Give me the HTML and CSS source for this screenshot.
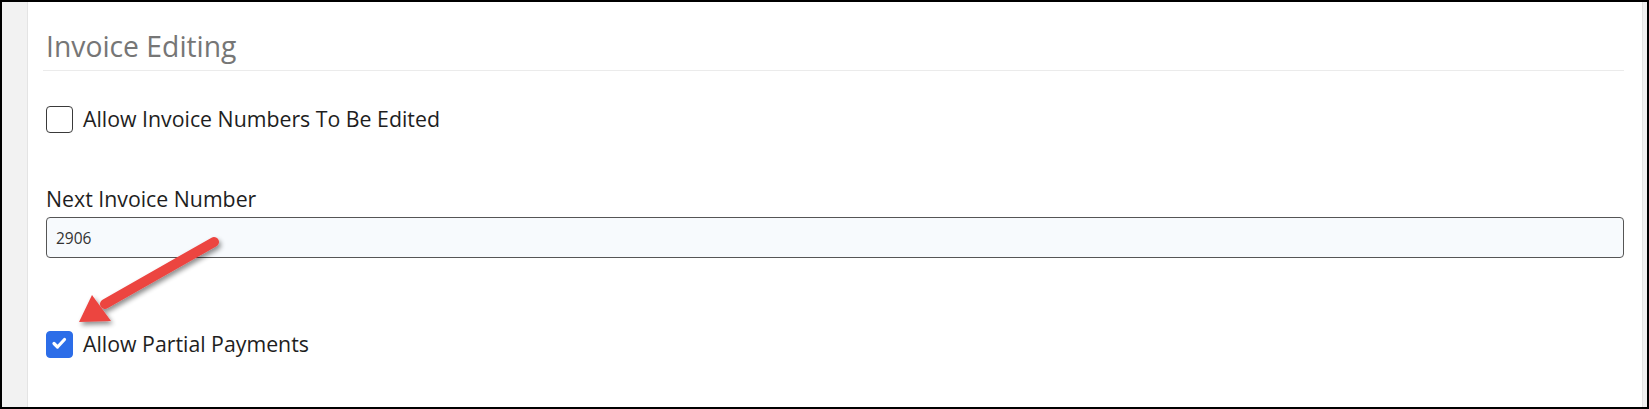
FILE: index.html
```html
<!DOCTYPE html>
<html>
<head>
<meta charset="utf-8">
<link rel="stylesheet" href="styles.css">
</head>
<body>
<div class="frame">
  <div class="side-left"></div>
  <main class="content">
    <h2 class="section-title">Invoice Editing</h2>
    <div class="check-row first">
      <span class="checkbox"></span>
      <span class="check-label">Allow Invoice Numbers To Be Edited</span>
    </div>
    <div class="field">
      <label class="field-label">Next Invoice Number</label>
      <div class="input">2906</div>
    </div>
    <div class="check-row last">
      <span class="checkbox checked">
        <svg viewBox="0 0 26 26" width="26" height="26"><path d="M8 13.5 L11.5 17 L18.5 9.5" fill="none" stroke="#fff" stroke-width="3.2" stroke-linecap="round" stroke-linejoin="round"/></svg>
      </span>
      <span class="check-label">Allow Partial Payments</span>
    </div>
    <svg class="arrow" width="200" height="120" viewBox="0 0 200 120">
      <defs>
        <filter id="sh" x="-20%" y="-20%" width="140%" height="140%">
          <feGaussianBlur in="SourceAlpha" stdDeviation="2.5"/>
          <feOffset dx="2" dy="3" result="b"/>
          <feComponentTransfer><feFuncA type="linear" slope="0.45"/></feComponentTransfer>
          <feMerge><feMergeNode/><feMergeNode in="SourceGraphic"/></feMerge>
        </filter>
      </defs>
      <g filter="url(#sh)">
        <line x1="171" y1="20" x2="62" y2="82" stroke="#ec4441" stroke-width="10" stroke-linecap="round"/>
        <polygon points="36,100 49,73 68,99" fill="#ec4441"/>
      </g>
    </svg>
  </main>
  <div class="side-right"></div>
</div>
</body>
</html>
```
FILE: styles.css
```css
* { box-sizing: border-box; }
html, body { margin: 0; padding: 0; background: #fff; }
body { font-family: "Open Sans", "Noto Sans", sans-serif; }

.frame {
  width: 1649px;
  height: 409px;
  border: 2px solid #000;
  display: flex;
  overflow: hidden;
}
.side-left {
  width: 26px;
  flex: none;
  background: #f2f2f2;
  border-right: 1px solid #e4e4e4;
}
.side-right {
  width: 5px;
  flex: none;
  background: #f0f0f0;
  border-left: 1px solid #e2e2e2;
}
.content {
  flex: 1;
  position: relative;
  padding: 26px 18px 0 15px;
}
.section-title {
  margin: 0;
  font-size: 28.3px;
  font-weight: 400;
  line-height: 36px;
  color: #767676;
  padding: 0 0 6px 3px;
  border-bottom: 1px solid #ebebeb;
}
.check-row {
  display: flex;
  align-items: center;
  gap: 10px;
  padding-left: 3px;
}
.check-row.first { margin-top: 34px; }
.check-row.last { margin-top: 72px; }
.checkbox {
  width: 27px;
  height: 27px;
  border: 1.5px solid #3a3a3a;
  border-radius: 4px;
  background: #fff;
  flex: none;
  display: flex;
}
.checkbox.checked {
  background: #2c6de8;
  border-color: #2c6de8;
}
.checkbox.checked svg { margin: -1.5px; }
.check-label {
  font-size: 21.3px;
  font-weight: 500;
  color: #1e1e1e;
  line-height: 28px;
}
.field { margin-top: 52px; padding-left: 3px; }
.field-label {
  display: block;
  font-size: 21.3px;
  font-weight: 500;
  color: #1e1e1e;
  line-height: 28px;
}
.input {
  margin-top: 4px;
  height: 41px;
  border: 1px solid #555;
  border-radius: 4px;
  background: #f7fafd;
  font-size: 15.5px;
  color: #333;
  padding: 0 0 0 9px;
  display: flex;
  align-items: center;
}
.arrow {
  position: absolute;
  left: 15px;
  top: 220px;
}
```
